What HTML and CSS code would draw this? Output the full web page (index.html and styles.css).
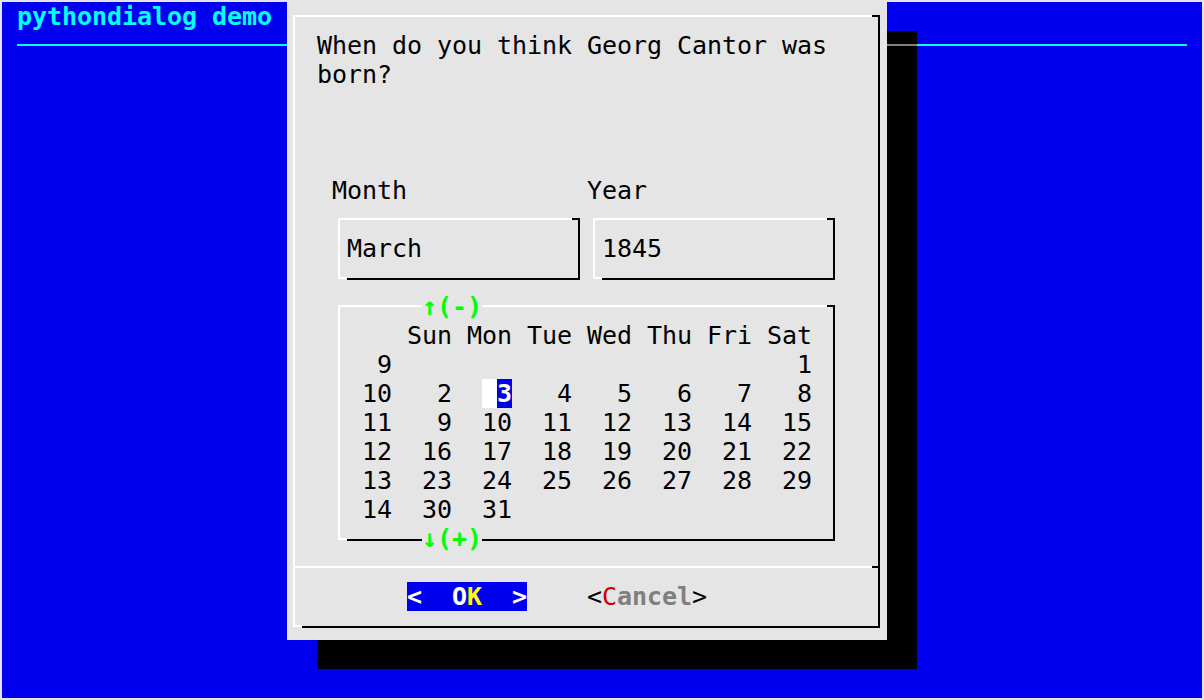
FILE: index.html
```html
<!DOCTYPE html>
<html lang="en">
<head>
<meta charset="utf-8">
<title>pythondialog demo</title>
<link rel="stylesheet" href="styles.css">
</head>
<body>
<div class="screen">
  <div class="title">pythondialog demo</div>
  <div class="rule"></div>
  <div class="shadow"></div>
  <div class="shadow-rule"></div>
  <div class="dialog">
    <div class="frame frame-dialog"></div>
    <div class="sep"></div>
    <div class="q1">When do you think Georg Cantor was</div>
    <div class="q2">born?</div>
    <div class="lbl-month">Month</div>
    <div class="lbl-year">Year</div>
    <div class="frame box-month"></div>
    <div class="val-month">March</div>
    <div class="frame box-year"></div>
    <div class="val-year">1845</div>
    <div class="frame box-cal"></div>
    <div class="arrow arrow-up">↑(-)</div>
    <div class="arrow arrow-down">↓(+)</div>
    <div class="cal">   Sun Mon Tue Wed Thu Fri Sat
 9                           1
10   2  <span class="cursor"> </span><span class="sel">3</span>   4   5   6   7   8
11   9  10  11  12  13  14  15
12  16  17  18  19  20  21  22
13  23  24  25  26  27  28  29
14  30  31</div>
    <div class="btn-ok"><span class="w">&lt;  O</span><span class="y">K</span><span class="w">  &gt;</span></div>
    <div class="btn-cancel">&lt;<span class="key">C</span><span class="lab">ancel</span>&gt;</div>
  </div>
</div>
</body>
</html>
```

FILE: styles.css
```css
html, body {
  margin: 0;
  padding: 0;
}
body {
  background: #e5e5e5;
  padding: 2px;
  width: 1200px;
  height: 696px;
  overflow: hidden;
}
.screen {
  display: grid;
  grid-template-columns: repeat(80, 15px);
  grid-template-rows: repeat(24, 29px);
  width: 1200px;
  height: 696px;
  background: #0000ee;
  font-family: "DejaVu Sans Mono", monospace;
  font-size: 25px;
  line-height: 29px;
  letter-spacing: -0.05px;
  white-space: pre;
}
.title {
  grid-row: 1;
  grid-column: 2 / 20;
  color: #00ffff;
  font-weight: bold;
}
.rule {
  grid-row: 2;
  grid-column: 2 / 80;
  background: linear-gradient(#00ffff, #00ffff) 0 13px / 100% 2px no-repeat;
}
.shadow {
  grid-row: 2 / 24;
  grid-column: 22 / 62;
  background: #000;
}
.shadow-rule {
  grid-row: 2;
  grid-column: 60 / 62;
  background: linear-gradient(#7f7f7f, #7f7f7f) 0 13px / 100% 2px no-repeat;
}
.dialog {
  grid-row: 1 / 23;
  grid-column: 20 / 60;
  background: #e5e5e5;
  color: #000;
  display: grid;
  grid-template-columns: repeat(40, 15px);
  grid-template-rows: repeat(22, 29px);
}

/* box frames: white top/left, black right/bottom */
.frame {
  position: relative;
}
.frame::before {
  content: "";
  position: absolute;
  top: 13px;
  left: 6px;
  right: 15px;
  bottom: 13px;
  border-top: 2px solid #fff;
  border-left: 2px solid #fff;
  background: linear-gradient(#fff, #fff) left bottom / 7px 2px no-repeat;
}
.frame::after {
  content: "";
  position: absolute;
  top: 13px;
  left: 15px;
  right: 7px;
  bottom: 12px;
  border-right: 2px solid #000;
  border-bottom: 2px solid #000;
  background: linear-gradient(#000, #000) right top / 6px 2px no-repeat;
}
.frame-dialog {
  grid-row: 1 / 23;
  grid-column: 1 / 41;
}
.sep {
  grid-row: 20;
  grid-column: 1 / 41;
  position: relative;
}
.sep::before {
  content: "";
  position: absolute;
  top: 13px;
  left: 6px;
  right: 15px;
  height: 2px;
  background: #fff;
}
.sep::after {
  content: "";
  position: absolute;
  top: 13px;
  right: 7px;
  width: 8px;
  height: 2px;
  background: #000;
}

.q1 {
  grid-row: 2;
  grid-column: 3 / 40;
}
.q2 {
  grid-row: 3;
  grid-column: 3 / 40;
}
.lbl-month {
  grid-row: 7;
  grid-column: 4 / 10;
}
.lbl-year {
  grid-row: 7;
  grid-column: 21 / 26;
}
.box-month {
  grid-row: 8 / 11;
  grid-column: 4 / 21;
}
.val-month {
  grid-row: 9;
  grid-column: 5 / 15;
}
.box-year {
  grid-row: 8 / 11;
  grid-column: 21 / 38;
}
.val-year {
  grid-row: 9;
  grid-column: 22 / 32;
}
.box-cal {
  grid-row: 11 / 20;
  grid-column: 4 / 38;
}
.arrow {
  position: relative;
  z-index: 1;
  grid-column: 10 / 14;
  background: #e5e5e5;
  color: #00ff00;
  font-weight: bold;
}
.arrow-up {
  grid-row: 11;
}
.arrow-down {
  grid-row: 19;
}
.cal {
  grid-row: 12 / 19;
  grid-column: 6 / 36;
}
.cursor {
  background: #fff;
}
.sel {
  background: #0000ee;
  color: #fff;
  font-weight: bold;
}
.btn-ok {
  grid-row: 21;
  grid-column: 9 / 17;
  background: #0000ee;
  font-weight: bold;
}
.btn-ok .w {
  color: #fff;
}
.btn-ok .y {
  color: #ffff00;
}
.btn-cancel {
  grid-row: 21;
  grid-column: 21 / 29;
  color: #000;
}
.btn-cancel .key {
  color: #cd0000;
}
.btn-cancel .lab {
  color: #7f7f7f;
  font-weight: bold;
}
```
